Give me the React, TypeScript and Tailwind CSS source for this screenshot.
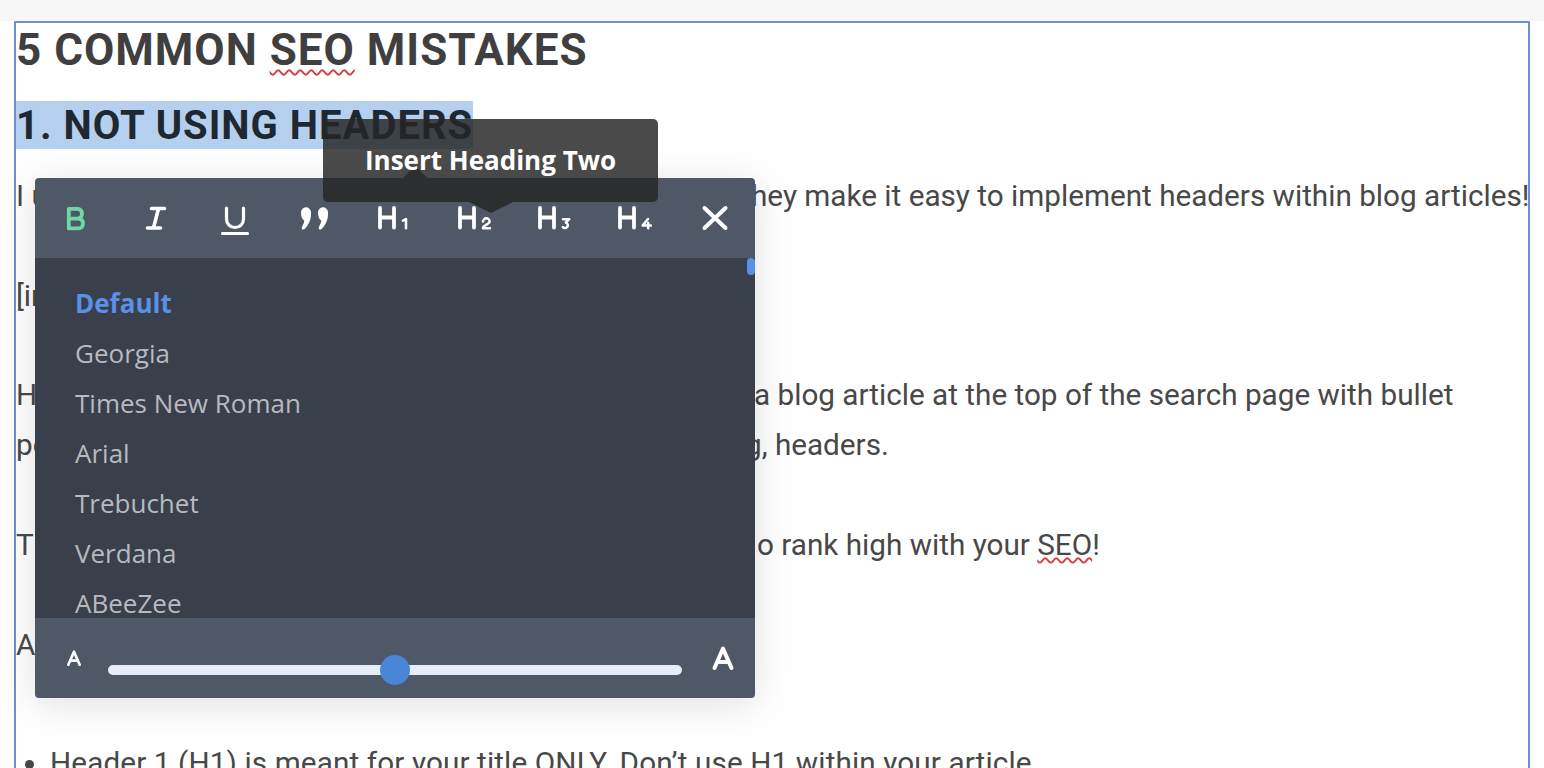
import React from "react";

const stroke = { fill: "none", stroke: "currentColor", strokeLinecap: "round" as const, strokeLinejoin: "round" as const };

function Digit({ n }: { n: number }) {
  const d =
    n === 1 ? "M28 22.6L31 21V30.2" :
    n === 2 ? "M28 23.6a3.3 3.3 0 0 1 6.6 0c0 2.6-6.6 3.6-6.6 6.6h7" :
    n === 3 ? "M28 21.2h6.2l-3.4 3.4a2.8 2.8 0 1 1-3 4.4" :
    "M33 21L27.6 27.5h8.2M33.2 25v5.2";
  return <path d={d} {...stroke} strokeWidth={2.5} />;
}

function HeadingIcon({ n }: { n: number }) {
  return (
    <svg viewBox="0 0 40 40" className="w-10 h-10 text-white">
      <path d="M5 10V29.5M19 10V29.5M5 19.5H19" {...stroke} strokeWidth={3.8} />
      <Digit n={n} />
    </svg>
  );
}

function BoldIcon() {
  return (
    <svg viewBox="0 0 40 40" className="w-10 h-10 text-[#6fd6a8]">
      <path d="M13.8 10.8H23a5 5 0 0 1 0 9.8H13.8M23 20.6h1a5 5 0 0 1 0 9.8H13.8V10.8" {...stroke} strokeWidth={3.8} />
    </svg>
  );
}

function ItalicIcon() {
  return (
    <svg viewBox="0 0 40 40" className="w-10 h-10 text-white">
      <path d="M16.5 10.5H29.5M12.5 30H25.5M23.5 10.5L18.5 30" {...stroke} strokeWidth={3.6} />
    </svg>
  );
}

function UnderlineIcon() {
  return (
    <svg viewBox="0 0 40 40" className="w-10 h-10 text-white">
      <path d="M11.5 10V21a8.5 8.5 0 0 0 17 0V10M7.5 35.5H32.5" {...stroke} strokeWidth={3.2} />
    </svg>
  );
}

function QuoteIcon() {
  const d = "M6 14.6a5 5 0 0 1 10-.5c.5 6.5-2 13-6.5 17-1.5 1.3-3.4-.2-2.6-1.9 1.2-2.4 2.2-4.6 2.4-6.6-2-1-3.3-4-3.3-8z";
  return (
    <svg viewBox="0 0 40 40" className="w-10 h-10 text-white">
      <path d={d} fill="currentColor" />
      <path d={d} fill="currentColor" transform="translate(17 0)" />
    </svg>
  );
}

function CloseIcon() {
  return (
    <svg viewBox="0 0 40 40" className="w-10 h-10 text-white">
      <path d="M9.5 10L30.5 30M30.5 10L9.5 30" {...stroke} strokeWidth={4} />
    </svg>
  );
}

function LetterA({ className }: { className: string }) {
  return (
    <svg viewBox="0 0 24 24" className={className}>
      <path d="M3.5 22L12 2.5L20.5 22M6.5 16H17.5" fill="none" stroke="currentColor" strokeWidth={4} strokeLinecap="round" strokeLinejoin="round" />
    </svg>
  );
}

const fonts = ["Georgia", "Times New Roman", "Arial", "Trebuchet", "Verdana", "ABeeZee", "Abel"];

export default function App() {
  return (
    <div className="relative h-[768px] w-[1544px] overflow-hidden bg-white font-['Roboto',sans-serif]">
      <div className="h-[21px] bg-[#f7f7f7]" />
      <div className="ml-[14px] h-[800px] w-[1516px] rounded-t-[2px] border-2 border-b-0 border-[#6b8fd0] text-[29.7px] text-[#484848]">
        <h1 className="h-[54px] text-[44px] font-bold leading-[54px] tracking-[1px] text-[#3f3f3f]">
          5 COMMON{" "}
          <span className="underline decoration-[#d83a3a] decoration-wavy decoration-[1.5px] underline-offset-[4px]">SEO</span> MISTAKES
        </h1>
        <h2 className="mt-[24px] h-[48px] text-[40px] font-bold leading-[50px] tracking-[1px]">
          <span className="inline-block h-[48px] bg-[#b4d0ee] text-[#1f2831]">1. NOT USING HEADERS</span>
        </h2>
        <div className="mt-[22px]">
          <div className="flex h-[50px] items-center whitespace-nowrap">
            <span className="block w-[735px] shrink-0 overflow-hidden">I use Squarespace for all of my websites and blogs because they</span>
            <span>hey make it easy to implement headers within blog articles!</span>
          </div>
          <div className="h-[50px]" />
          <div className="flex h-[50px] items-center">[image]</div>
          <div className="h-[49px]" />
          <div className="flex h-[50px] items-center whitespace-nowrap">
            <span className="block w-[735px] shrink-0 overflow-hidden">Have you ever done a Google search and seen a blog article</span>
            <span className="ml-[3px]">a blog article at the top of the search page with bullet</span>
          </div>
          <div className="flex h-[50px] items-center whitespace-nowrap">
            <span className="block w-[729px] shrink-0 overflow-hidden">points pulled from the article? That is because of good formatting</span>
            <span>g, headers.</span>
          </div>
          <div className="h-[50px]" />
          <div className="flex h-[50px] items-center whitespace-nowrap">
            <span className="block w-[735px] shrink-0 overflow-hidden">The better the formatting of your article, the more likely you are t</span>
            <span className="ml-[6px]">
              o rank high with your{" "}
              <span className="underline decoration-[#d83a3a] decoration-wavy decoration-[1.5px] underline-offset-[2px]">SEO</span>!
            </span>
          </div>
          <div className="h-[50px]" />
          <div className="flex h-[50px] items-center">A few rules for headers:</div>
          <ul className="mt-[68px] list-disc pl-[34px]">
            <li className="h-[50px] leading-[50px] tracking-[0.12px]">Header 1 (H1) is meant for your title ONLY. Don’t use H1 within your article.</li>
          </ul>
        </div>
      </div>

      {/* format popup */}
      <div className="absolute left-[35px] top-[178px] w-[720px] rounded-[4px] shadow-[0_6px_40px_rgba(0,0,0,0.13)]">
        <div className="absolute left-[365px] top-[-6px] h-[30px] w-[30px] rotate-45 rounded-[4px] bg-[#4f5866]" />
        <div className="relative flex h-[80px] rounded-t-[4px] bg-[#4f5866]">
          <button className="flex h-[80px] w-[80px] items-center justify-center"><BoldIcon /></button>
          <button className="flex h-[80px] w-[80px] items-center justify-center"><ItalicIcon /></button>
          <button className="flex h-[80px] w-[80px] items-center justify-center"><UnderlineIcon /></button>
          <button className="flex h-[80px] w-[80px] items-center justify-center"><QuoteIcon /></button>
          <button className="flex h-[80px] w-[80px] items-center justify-center"><HeadingIcon n={1} /></button>
          <button className="flex h-[80px] w-[80px] items-center justify-center"><HeadingIcon n={2} /></button>
          <button className="flex h-[80px] w-[80px] items-center justify-center"><HeadingIcon n={3} /></button>
          <button className="flex h-[80px] w-[80px] items-center justify-center"><HeadingIcon n={4} /></button>
          <button className="flex h-[80px] w-[80px] items-center justify-center"><CloseIcon /></button>
        </div>
        <div className="relative h-[360px] overflow-hidden bg-[#39404c] pl-[40px] pt-[20px] font-['Open_Sans',sans-serif] text-[26px] text-[#b7babf]">
          <div className="h-[50px] font-bold leading-[50px] text-[#5b8fe8]">Default</div>
          {fonts.map((f) => (
            <div key={f} className="h-[50px] leading-[50px]">{f}</div>
          ))}
          <div className="absolute right-0 top-0 h-[17px] w-[8px] rounded-[4px] bg-[#5b8fe8]" />
        </div>
        <div className="flex h-[80px] items-center rounded-b-[4px] bg-[#4f5866]">
          <LetterA className="ml-[31px] h-[18px] w-[16px] text-white" />
          <div className="relative ml-[26px] mt-[24px] h-[10px] w-[574px] rounded-[5px] bg-[#e6edf7]">
            <div className="absolute left-[272px] top-[-10px] h-[30px] w-[30px] rounded-full bg-[#4a86d8]" />
          </div>
          <LetterA className="ml-[29px] h-[26px] w-[24px] text-white" />
        </div>
      </div>

      {/* tooltip */}
      <div className="absolute left-[323px] top-[119px] flex h-[83px] w-[335px] justify-center rounded-[5px] bg-[rgba(37,37,37,0.83)] pt-[24px] font-['Open_Sans',sans-serif] text-[26px] font-bold leading-[34px] text-white">
        Insert Heading Two
        <div className="absolute left-[146px] top-[83px] h-0 w-0 border-x-[22px] border-t-[11px] border-x-transparent border-t-[rgba(37,37,37,0.83)]" />
      </div>
    </div>
  );
}
